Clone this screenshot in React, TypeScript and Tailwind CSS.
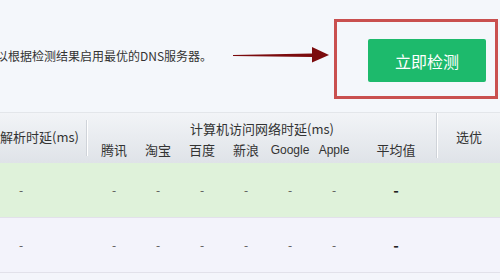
import React from "react";

const font = { fontFamily: '"Microsoft YaHei", "Noto Sans CJK SC", "Noto Sans", sans-serif' };
const latin = { fontFamily: '"Liberation Sans", Arial, sans-serif' };

const subs = ["腾讯", "淘宝", "百度", "新浪", "Google", "Apple"];

function Row({ bg }: { bg: string }) {
  return (
    <div className={`flex h-[55px] items-center border-b border-[#e2e1ea] ${bg}`}>
      <div className="w-[86px] shrink-0 pl-[19px] text-[12px] text-[#555]">-</div>
      <div className="w-[6px] shrink-0" />
      {subs.map((s) => (
        <div key={s} className="w-[44px] shrink-0 text-center text-[12px] text-[#555]">
          -
        </div>
      ))}
      <div className="w-[80px] shrink-0 text-center text-[15px] font-bold text-[#222]">-</div>
      <div className="flex-1" />
    </div>
  );
}

export default function App() {
  return (
    <div className="w-[500px] h-[280px] overflow-hidden bg-[#f4f7fb]" style={font}>
      {/* top section */}
      <div className="flex h-[112px] items-start">
        <div className="flex h-full w-[334px] items-center">
          <div className="ml-[-4px] w-[237px] shrink-0 text-[12px] text-[#333] whitespace-nowrap">
            以根据检测结果启用最优的DNS服务器。
          </div>
          <svg width="97" height="18" viewBox="0 0 97 18" className="shrink-0">
            <polygon points="0,8 79,6.5 79,0 96,8 79,15.5 79,10 0,9" fill="#7b0b0d" />
          </svg>
        </div>
        <div className="mt-[19px] flex h-[80px] w-[164px] items-start border-[3px] border-[#c9504f] pl-[31px] pt-[17px]">
          <button className="flex h-[43px] w-[118px] items-center justify-center rounded-[2px] bg-[#1dba6c] text-[16px] text-white">
            立即检测
          </button>
        </div>
      </div>

      {/* table header */}
      <div className="flex h-[51px] border-t border-[#e3e6ea] bg-gradient-to-b from-[#f2f4f7] to-[#dfe3e8] text-[13px] text-[#333]">
        <div className="flex w-[86px] shrink-0 items-center pb-[2px] whitespace-nowrap">解析时延(ms)</div>
        <div className="my-[7px] w-[2px] shrink-0 border-l border-[#cfd3d9] bg-white" />
        <div className="flex w-[348px] shrink-0 flex-col">
          <div className="mt-[6px] h-[20px] text-center leading-[20px]">计算机访问网络时延(ms)</div>
          <div className="flex h-[22px] items-center pl-[4px]">
            {subs.map((s) => (
              <div
                key={s}
                className={`w-[44px] shrink-0 text-center whitespace-nowrap ${s === "Google" || s === "Apple" ? "text-[12px]" : ""}`}
                style={s === "Google" || s === "Apple" ? latin : undefined}
              >
                {s}
              </div>
            ))}
            <div className="w-[80px] shrink-0 text-center">平均值</div>
          </div>
        </div>
        <div className="mb-[5px] w-[2px] shrink-0 border-l border-[#cfd3d9] bg-white" />
        <div className="flex flex-1 items-center justify-center pb-[2px]">选优</div>
      </div>

      <Row bg="bg-[#dff2da]" />
      <Row bg="bg-[#f3f3fb]" />
      <div className="h-[8px] bg-[#f4f5fb]" />
    </div>
  );
}
